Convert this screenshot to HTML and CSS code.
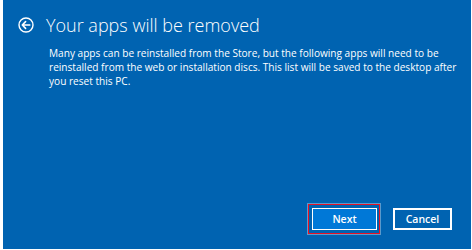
FILE: index.html
```html
<!DOCTYPE html>
<html>
<head>
<meta charset="utf-8">
<link rel="stylesheet" href="styles.css">
</head>
<body>
<div class="screen">
  <div class="header">
    <svg class="back" width="16" height="16" viewBox="0 0 16 16">
      <circle cx="8" cy="8" r="7" fill="none" stroke="#fff" stroke-width="1.4"/>
      <path d="M4.3 8H11.8M7.6 4.6L4.3 8L7.6 11.4" fill="none" stroke="#fff" stroke-width="1.6" stroke-linecap="round" stroke-linejoin="round"/>
    </svg>
    <h1 class="title">Your apps will be removed</h1>
  </div>
  <p class="desc">Many apps can be reinstalled from the Store, but the following apps will need to be reinstalled from the web or installation discs. This list will be saved to the desktop after you reset this PC.</p>
  <div class="footer">
    <div class="focus-ring">
      <button class="btn btn-primary">Next</button>
    </div>
    <button class="btn">Cancel</button>
  </div>
</div>
</body>
</html>
```
FILE: styles.css
```css
html, body {
  margin: 0;
  padding: 0;
  background: #fff;
}
.screen {
  box-sizing: border-box;
  width: 472px;
  height: 250px;
  background: #0063b1;
  border-left: 3px solid #fff;
  border-right: 1px solid #fff;
  border-bottom: 1px solid #fff;
  display: flex;
  flex-direction: column;
  color: #fff;
  font-family: "Open Sans", "Noto Sans", sans-serif;
}
.header {
  display: flex;
  align-items: center;
  gap: 12px;
  padding: 13px 0 0 15px;
}
.back {
  display: block;
  flex: none;
}
.title {
  margin: 0;
  font-size: 18px;
  font-weight: 300;
  line-height: 24px;
}
.desc {
  margin: 9px 0 0 46px;
  width: 418px;
  font-size: 10.1px;
  line-height: 14px;
}
.footer {
  margin-top: auto;
  display: flex;
  align-items: center;
  justify-content: flex-end;
  gap: 13px;
  padding: 0 19px 15px 0;
}
.focus-ring {
  display: flex;
  padding: 3px 2px 3px 3px;
  border: 1px solid #e81123;
  box-shadow: 0 0 0 1px rgba(255,255,255,0.35);
}
.btn {
  box-sizing: border-box;
  height: 22px;
  width: 59px;
  border: 2px solid #fff;
  background: transparent;
  color: #fff;
  font-family: "Open Sans", "Noto Sans", sans-serif;
  font-size: 10.5px;
  font-weight: 600;
  padding: 0;
}
.btn-primary {
  width: 65px;
  background: #0078d7;
  border-width: 1px;
}
```
